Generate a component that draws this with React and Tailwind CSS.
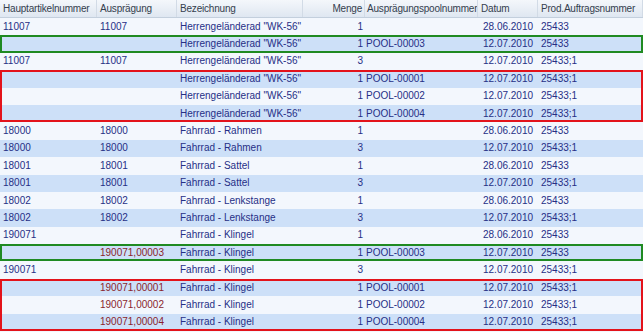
const COLS = ['w-[97px]', 'w-[80px]', 'w-[126px]', 'w-[62px]', 'w-[113px]', 'w-[60px]', 'flex-1'];

const HEADERS = ['Hauptartikelnummer', 'Ausprägung', 'Bezeichnung', 'Menge', 'Ausprägungspoolnummer', 'Datum', 'Prod.Auftragsnummer'];

const H = 'Herrengeländerad "WK-56"';

const rows = [
  ['11007', '11007', H, '1', '', '28.06.2010', '25433'],
  ['', '', H, '1', 'POOL-00003', '12.07.2010', '25433'],
  ['11007', '11007', H, '3', '', '12.07.2010', '25433;1'],
  ['', '', H, '1', 'POOL-00001', '12.07.2010', '25433;1'],
  ['', '', H, '1', 'POOL-00002', '12.07.2010', '25433;1'],
  ['', '', H, '1', 'POOL-00004', '12.07.2010', '25433;1'],
  ['18000', '18000', 'Fahrrad - Rahmen', '1', '', '28.06.2010', '25433'],
  ['18000', '18000', 'Fahrrad - Rahmen', '3', '', '12.07.2010', '25433;1'],
  ['18001', '18001', 'Fahrrad - Sattel', '1', '', '28.06.2010', '25433'],
  ['18001', '18001', 'Fahrrad - Sattel', '3', '', '12.07.2010', '25433;1'],
  ['18002', '18002', 'Fahrrad - Lenkstange', '1', '', '28.06.2010', '25433'],
  ['18002', '18002', 'Fahrrad - Lenkstange', '3', '', '12.07.2010', '25433;1'],
  ['190071', '', 'Fahrrad - Klingel', '1', '', '28.06.2010', '25433'],
  ['', '190071,00003', 'Fahrrad - Klingel', '1', 'POOL-00003', '12.07.2010', '25433'],
  ['190071', '', 'Fahrrad - Klingel', '3', '', '12.07.2010', '25433;1'],
  ['', '190071,00001', 'Fahrrad - Klingel', '1', 'POOL-00001', '12.07.2010', '25433;1'],
  ['', '190071,00002', 'Fahrrad - Klingel', '1', 'POOL-00002', '12.07.2010', '25433;1'],
  ['', '190071,00004', 'Fahrrad - Klingel', '1', 'POOL-00004', '12.07.2010', '25433;1'],
];

// groups of rows with an outline: [start, count, color]
const groups = [
  [0, 1, null], [1, 1, 'green'], [2, 1, null], [3, 3, 'red'],
  [6, 7, null], [13, 1, 'green'], [14, 1, null], [15, 3, 'red'],
];

function Row({ r, i }) {
  const bg = i % 2 === 0 ? 'bg-[#f3f7fd]' : 'bg-[#cde0f8]';
  return (
    <div className={`flex h-[17.4px] items-center ${bg}`}>
      {r.map((c, j) => (
        <div
          key={j}
          className={`${COLS[j]} shrink-0 whitespace-nowrap overflow-hidden ${j === 3 ? 'text-right pr-[2px]' : j === 4 ? 'pl-[1px]' : j === 5 ? 'pl-[5px]' : 'pl-[3px]'} ${j === 1 && c.includes(',') ? 'text-[#8a1f2e]' : 'text-[#262f86]'}`}
        >
          {c}
        </div>
      ))}
    </div>
  );
}

export default function App() {
  return (
    <div className="w-[643px] h-[332px] overflow-hidden bg-[#f3f7fd] text-[10px] leading-none" style={{ fontFamily: '"Liberation Sans", Arial, sans-serif' }}>
      <div className="flex h-[18px] items-center bg-gradient-to-b from-[#f4f7fb] to-[#dfe7f1] border-b border-[#c3cfdd] text-[#34404e] tracking-[-0.2px]">
        {HEADERS.map((h, j) => (
          <div key={h} className={`${COLS[j]} shrink-0 h-full flex items-center border-r border-[#d2dbe6] whitespace-nowrap overflow-hidden ${j === 3 ? 'justify-end pr-[2px]' : j === 4 ? 'pl-[2px]' : 'pl-[3px]'}`}>
            {h}
          </div>
        ))}
      </div>
      {groups.map(([s, n, color]) => (
        <div key={s} className="relative">
          {rows.slice(s, s + n).map((r, k) => (
            <Row key={s + k} r={r} i={s + k} />
          ))}
          {color && (
            <div className={`absolute inset-0 border-2 ${color === 'green' ? 'border-[#1f8a22]' : 'border-[#e3131b]'}`} />
          )}
        </div>
      ))}
    </div>
  );
}
